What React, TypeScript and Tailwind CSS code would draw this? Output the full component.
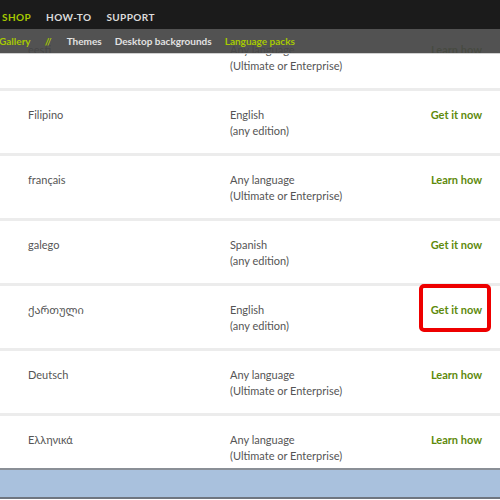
import React from "react";

type Row = { name: string; l1: string; l2: string; action: string; boxed?: boolean };

const rows: Row[] = [
  { name: "eesti", l1: "Any language", l2: "(Ultimate or Enterprise)", action: "Learn how" },
  { name: "Filipino", l1: "English", l2: "(any edition)", action: "Get it now" },
  { name: "français", l1: "Any language", l2: "(Ultimate or Enterprise)", action: "Learn how" },
  { name: "galego", l1: "Spanish", l2: "(any edition)", action: "Get it now" },
  { name: "ქართული", l1: "English", l2: "(any edition)", action: "Get it now", boxed: true },
  { name: "Deutsch", l1: "Any language", l2: "(Ultimate or Enterprise)", action: "Learn how" },
  { name: "Ελληνικά", l1: "Any language", l2: "(Ultimate or Enterprise)", action: "Learn how" },
];

const font = { fontFamily: 'Lato, "Noto Sans", "Noto Sans Georgian", "DejaVu Sans", sans-serif' };

export default function App() {
  return (
    <div className="relative w-[500px] h-[500px] overflow-hidden bg-white" style={font}>
      {/* content */}
      <div className="pt-[23px]">
        {rows.map((r, i) => (
          <div
            key={i}
            className={`border-t-[3px] border-[#ececec] ${i === rows.length - 1 ? "h-[55px]" : "h-[65px]"} pt-[16px] flex text-[11px] leading-[16px] text-[#555]`}
          >
            <div className="w-[230px] pl-[28px]">{r.name}</div>
            <div className="flex-1">
              <div>{r.l1}</div>
              <div>{r.l2}</div>
            </div>
            <div className="pr-[18px] font-bold text-[#5e8a0c]">
              <span className="relative">
                {r.action}
                {r.boxed && (
                  <span className="absolute left-[-12px] right-[-9px] top-[-19px] bottom-[-16px] border-[4px] border-[#ee0000] rounded-[5px]" />
                )}
              </span>
            </div>
          </div>
        ))}
        <div className="h-[31px] bg-[#a9c1dd] border-t-[2px] border-[#8a8f96] border-b-[2px] border-b-[#6f7680]" />
      </div>

      {/* header overlay */}
      <div className="absolute left-0 top-0 w-full">
        <div className="h-[29px] bg-[#1b1b1b] flex items-end pb-[4px] pl-[2px] gap-[15px] text-[10px] font-bold tracking-[0.4px] text-[#dcdcdc]">
          <span className="text-[#a6c900]">SHOP</span>
          <span>HOW-TO</span>
          <span>SUPPORT</span>
        </div>
        <div className="h-[25px] bg-[#454545]/[0.93] border-b border-[#d0d0d0] flex items-center text-[10px] font-bold text-[#e2e2e2]">
          <span className="text-[#a6c900] -ml-[1px]">Gallery</span>
          <span className="text-[#a6c900] ml-[14px]">//</span>
          <span className="ml-[15px]">Themes</span>
          <span className="ml-[13px]">Desktop backgrounds</span>
          <span className="ml-[13px] text-[#a6c900]">Language packs</span>
        </div>
      </div>
    </div>
  );
}
